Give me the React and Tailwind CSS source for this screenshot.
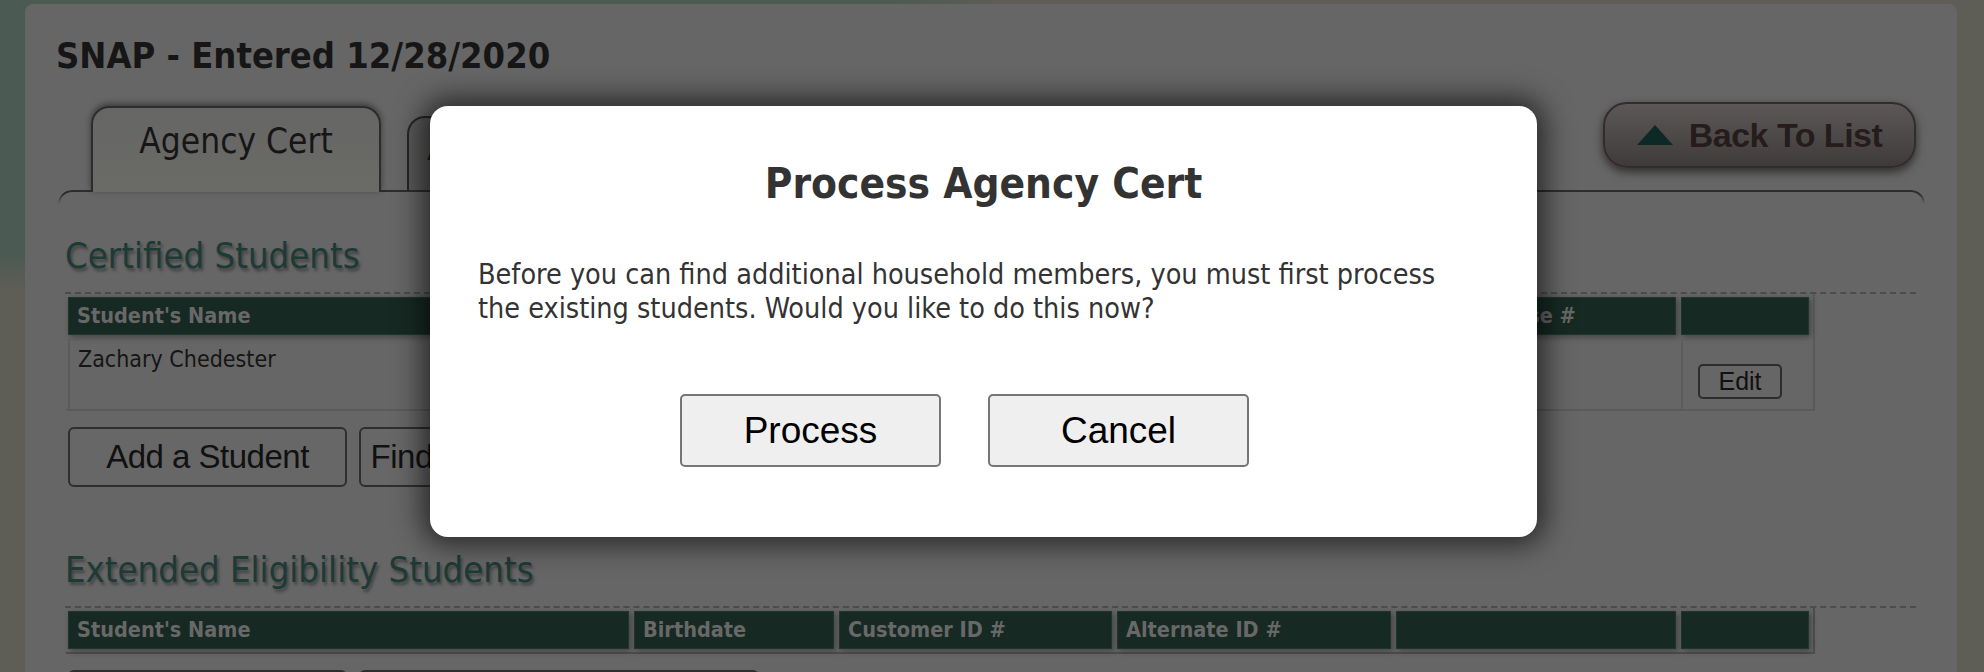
import React from "react";

const F = "font-['DejaVu_Sans_Condensed','DejaVu_Sans',sans-serif] [font-stretch:semi-condensed]";
const A = "font-['Liberation_Sans',Arial,sans-serif]";

const extCols = "grid grid-cols-[561px_200px_273px_274px_280px_128px] gap-x-[5px]";
const certCols = "grid grid-cols-[561px_200px_273px_370px_184px_128px] gap-x-[5px]";

function HeadCell({ children }) {
  return (
    <div className="h-[38px] bg-[#172923] border border-[#1f352d] shadow-[2px_2px_6px_rgba(0,0,0,0.35)] flex items-center pl-[8px] text-[21.5px] font-bold text-[#686868] whitespace-nowrap overflow-hidden">
      {children}
    </div>
  );
}

function SectionTitle({ children }) {
  return (
    <div className="ml-[7px] mr-[9px] border-b-2 border-dashed border-[#4c4c4c] pb-[16px]">
      <h2 className="text-[36.2px] leading-[40px] text-[#1d3a35] [text-shadow:2px_3px_3px_rgba(0,0,0,0.35)]">
        {children}
      </h2>
    </div>
  );
}

function GrayButton({ children, className = "" }) {
  return (
    <button className={`h-[60px] rounded-[6px] border-2 border-[#2e2e2e] bg-[#676767] ${A} text-[33px] tracking-[-0.5px] text-[#111] flex items-center justify-center ${className}`}>
      {children}
    </button>
  );
}

export default function App() {
  return (
    <div className={`relative w-[1984px] h-[672px] overflow-hidden bg-[radial-gradient(ellipse_1000px_290px_at_0_0,#4b5a52_88%,#5e5d56_100%)] pt-[4px] pl-[25px] pr-[27px] ${F}`}>
      <div className="h-[720px] bg-[#666666] rounded-t-[8px] pt-[32px]">
        {/* Title */}
        <h1 className="pl-[31px] text-[36px] leading-[40px] font-bold text-[#161616]">
          SNAP - Entered 12/28/2020
        </h1>

        {/* Tab row */}
        <div className="relative z-10 h-[116px] flex items-end justify-between -mb-[2px]">
          <div className="flex items-end ml-[66px]">
            <div className="w-[290px] h-[86px] rounded-t-[18px] border-2 border-b-0 border-[#2c2c2c] bg-[linear-gradient(#666666,#6a6a66)] shadow-[0_-2px_6px_rgba(0,0,0,0.45)] text-center pt-[13px]">
              <span className="text-[35px] leading-[40px] text-[#161616]">Agency Cert</span>
            </div>
            <div className="ml-[26px] mb-[2px] w-[260px] h-[74px] rounded-t-[18px] border-2 border-b-0 border-[#262626] bg-[linear-gradient(90deg,#5a5a5a,#3a3a3a)] text-center pt-[10px]">
              <span className="text-[35px] leading-[40px] text-[#161616]">Agency Detail</span>
            </div>
          </div>
          <button className="mr-[41px] mb-[24px] w-[313px] h-[66px] rounded-[24px] border-2 border-[#342b2b] bg-[linear-gradient(#5c5858,#3f3b3b)] shadow-[0_4px_10px_rgba(0,0,0,0.55)] flex items-center justify-center gap-[16px]">
            <svg width="36" height="20" viewBox="0 0 36 20">
              <polygon points="18,0 36,20 0,20" fill="#0e2826" />
            </svg>
            <span className={`${A} text-[34px] font-bold tracking-[-0.5px] text-[#261c1c]`}>Back To List</span>
          </button>
        </div>

        {/* Panel */}
        <div className="ml-[33px] mr-[32px]">
          <div className="h-[14px] rounded-t-[14px] border-t-2 border-x-2 border-[#2d2d2d] [mask-image:linear-gradient(to_bottom,black_30%,transparent)]" />

          <div className="mt-[32px]">
            <SectionTitle>Certified Students</SectionTitle>
            <div className="ml-[8px] w-[1749px] pt-[3px] pl-[2px] border-r-2 border-b-2 border-[#5a5a5a]">
              <div className={certCols}>
                <HeadCell>Student's Name</HeadCell>
                <HeadCell>Birthdate</HeadCell>
                <HeadCell>Customer ID #</HeadCell>
                <HeadCell>Alternate ID #</HeadCell>
                <HeadCell>Case #</HeadCell>
                <HeadCell></HeadCell>
              </div>
              <div className={`${certCols} mt-[4px] h-[70px]`}>
                <div className="border-l-2 border-t border-[#5c5c5c] pl-[8px] pt-[5px] text-[23px] leading-[28px] text-[#151515]">
                  Zachary Chedester
                </div>
                <div className="border-l-2 border-t border-[#5c5c5c]" />
                <div className="border-l-2 border-t border-[#5c5c5c]" />
                <div className="border-l-2 border-t border-[#5c5c5c]" />
                <div className="border-l-2 border-t border-[#5c5c5c]" />
                <div className="border-l-2 border-t border-[#5c5c5c] pl-[15px] pt-[24px]">
                  <button className={`w-[84px] h-[35px] rounded-[5px] border-2 border-[#2c2c2c] bg-[#666] ${A} text-[25px] leading-none text-[#111]`}>
                    Edit
                  </button>
                </div>
              </div>
            </div>

            <div className="ml-[10px] mt-[16px] flex gap-[12px]">
              <GrayButton className="w-[279px]">Add a Student</GrayButton>
              <GrayButton className="w-[390px]">Find Household Members</GrayButton>
            </div>
          </div>

          <div className="mt-[63px]">
            <SectionTitle>Extended Eligibility Students</SectionTitle>
            <div className="ml-[8px] w-[1749px] pt-[3px] pb-[3px] pl-[2px] border-r-2 border-b-2 border-[#4e4e4e]">
              <div className={extCols}>
                <HeadCell>Student's Name</HeadCell>
                <HeadCell>Birthdate</HeadCell>
                <HeadCell>Customer ID #</HeadCell>
                <HeadCell>Alternate ID #</HeadCell>
                <HeadCell></HeadCell>
                <HeadCell></HeadCell>
              </div>
            </div>
            <div className="ml-[10px] mt-[16px] flex gap-[12px]">
              <GrayButton className="w-[279px]">Add a Student</GrayButton>
              <GrayButton className="w-[400px]">Find Extended Students</GrayButton>
            </div>
          </div>
        </div>
      </div>

      {/* Modal */}
      <div className="absolute z-50 left-[430px] top-[106px] w-[1107px] h-[431px] rounded-[18px] bg-white shadow-[0_0_28px_8px_rgba(0,0,0,0.6)] pt-[54px]">
        <h2 className="text-center text-[42px] leading-[48px] font-bold text-[#333]">Process Agency Cert</h2>
        <p className="mt-[50px] pl-[48px] text-[28.5px] leading-[34px] text-[#333]">
          Before you can find additional household members, you must first process
          <br />
          the existing students. Would you like to do this now?
        </p>
        <div className="mt-[68px] pl-[250px] flex gap-[47px]">
          <button className={`w-[261px] h-[73px] rounded-[5px] border-2 border-[#767676] bg-[#efefef] ${A} text-[37px] text-black`}>
            Process
          </button>
          <button className={`w-[261px] h-[73px] rounded-[5px] border-2 border-[#767676] bg-[#efefef] ${A} text-[37px] text-black`}>
            Cancel
          </button>
        </div>
      </div>
    </div>
  );
}
